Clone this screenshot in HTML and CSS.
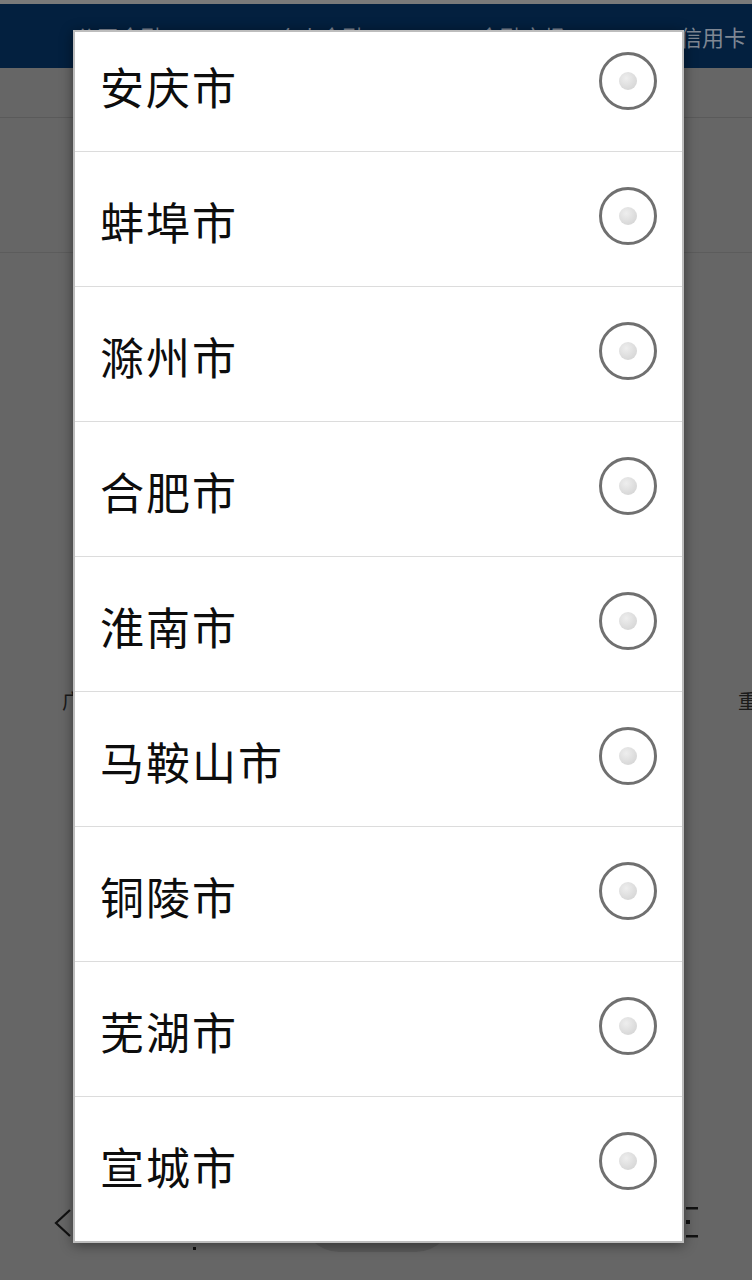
FILE: index.html
```html
<!DOCTYPE html>
<html>
<head>
    <title>选择城市</title>
    <meta name="viewport" content="width=device-width, initial-scale=1.0">
    <link rel="stylesheet" href="styles.css">
</head>

<body>
    <div class="statusbar"></div>
    <header class="nav">
        <span class="navItem">公司金融</span>
        <span class="navItem">个人金融</span>
        <span class="navItem">金融市场</span>
        <span class="navItem">信用卡</span>
    </header>
    <div class="tabs"></div>
    <div class="section"></div>

    <div class="content">
        <span class="sideText">广</span>
        <span class="sideText sideRight">重</span>
    </div>

    <footer class="bottom">
        <svg class="back" width="20" height="30" viewBox="0 0 20 30">
            <path d="M17 2 L3 15 L17 28" fill="none" stroke="#111" stroke-width="2.2"/>
        </svg>
        <span class="dot"></span>
        <div class="pill"></div>
        <svg class="menu" width="16" height="34" viewBox="0 0 16 34">
            <rect x="2" y="0" width="12" height="2.5" fill="#111"/>
            <rect x="2" y="13" width="4" height="4" fill="#111"/>
            <rect x="2" y="28" width="12" height="2.5" fill="#111"/>
        </svg>
    </footer>

    <!-- city picker dialog -->
    <div class="dialog">
        <ul class="cityList">
            <li class="city"><span class="cityName">安庆市</span><span class="radio"></span></li>
            <li class="city"><span class="cityName">蚌埠市</span><span class="radio"></span></li>
            <li class="city"><span class="cityName">滁州市</span><span class="radio"></span></li>
            <li class="city"><span class="cityName">合肥市</span><span class="radio"></span></li>
            <li class="city"><span class="cityName">淮南市</span><span class="radio"></span></li>
            <li class="city"><span class="cityName">马鞍山市</span><span class="radio"></span></li>
            <li class="city"><span class="cityName">铜陵市</span><span class="radio"></span></li>
            <li class="city"><span class="cityName">芜湖市</span><span class="radio"></span></li>
            <li class="city"><span class="cityName">宣城市</span><span class="radio"></span></li>
        </ul>
    </div>
</body>
</html>
```

FILE: styles.css
```css
body {
    margin: 0;
    height: 1280px;
    overflow: hidden;
    background-color: #666666;
    font-family: "Noto Sans CJK SC", "Noto Sans", sans-serif;
    display: flex;
    flex-direction: column;
}

.statusbar {
    height: 4px;
    background-color: #7a7a7a;
}

.nav {
    height: 64px;
    background-color: #03203f;
    display: flex;
    align-items: center;
    padding: 0 6px 0 75px;
    justify-content: space-between;
    font-size: 22px;
    color: #7f8793;
}

.tabs {
    height: 49px;
    border-bottom: 1px solid #5a5a5a;
}

.section {
    height: 134px;
    border-bottom: 1px solid #5c5c5c;
}

.content {
    flex: 1;
    display: flex;
    justify-content: space-between;
    padding: 436px 0 0 62px;
}

.sideText {
    font-size: 20px;
    color: #1a1a1a;
    line-height: 24px;
}

.sideRight {
    margin-right: -6px;
}

.bottom {
    height: 90px;
    display: flex;
    align-items: flex-start;
    padding: 0 52px 0 53px;
}

.back {
    margin-top: 18px;
}

.dot {
    width: 3px;
    height: 3px;
    background-color: #111;
    margin: 57px 0 0 120px;
}

.pill {
    width: 155px;
    height: 40px;
    margin: 22px 0 0 104px;
    background-color: #5a5a5a;
    border-radius: 0 0 50px 50px;
}

.menu {
    margin: 17px 0 0 auto;
}

.dialog {
    position: absolute;
    left: 73px;
    top: 30px;
    width: 607px;
    height: 1209px;
    background-color: #ffffff;
    border: 2px solid #bdbdbd;
    box-shadow: 0 2px 12px rgba(0, 0, 0, 0.45);
    overflow: hidden;
}

.cityList {
    list-style-type: none;
    margin: -15px 0 0 0;
    padding: 0;
}

.city {
    height: 134px;
    border-bottom: 1px solid #dcdcdc;
    display: flex;
    align-items: center;
    justify-content: space-between;
    padding: 0 25px 0 25px;
}

.city:last-child {
    border-bottom: none;
}

.cityName {
    font-size: 44px;
    letter-spacing: 2px;
    color: #0d0d0d;
    padding-top: 4px;
}

.radio {
    width: 52px;
    height: 52px;
    border: 3px solid #707070;
    border-radius: 50%;
    margin-bottom: 7px;
    display: flex;
    align-items: center;
    justify-content: center;
}

.radio::after {
    content: "";
    width: 18px;
    height: 18px;
    border-radius: 50%;
    background: radial-gradient(circle at 40% 35%, #eeeeee, #cfcfcf);
}
```
